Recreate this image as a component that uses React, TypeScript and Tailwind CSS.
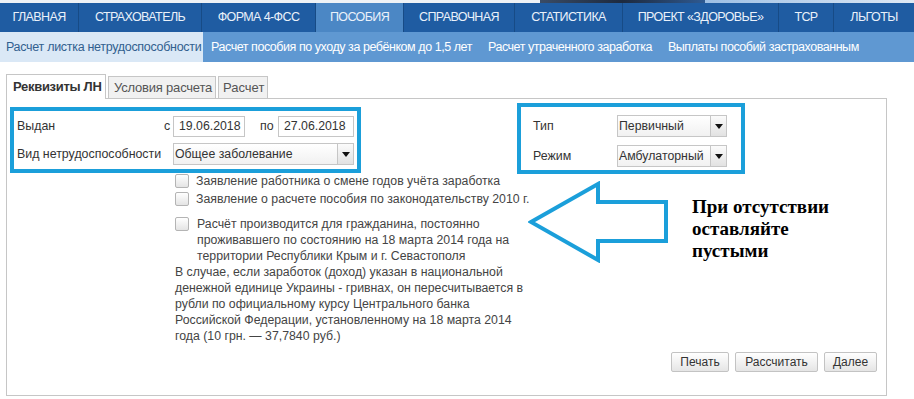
import { ReactNode } from 'react';

const sans = { fontFamily: '"Liberation Sans", Arial, sans-serif' };

function Caret() {
  return (
    <svg width="8" height="5" viewBox="0 0 8 5">
      <path d="M0 0 H8 L4 5 Z" fill="#111" />
    </svg>
  );
}

function Select({ value, className }: { value: string; className: string }) {
  return (
    <div
      className={`flex h-[22px] items-stretch border border-[#c6c6c6] bg-gradient-to-b from-white to-[#f1f1f1] text-[12.3px] text-[#333] ${className}`}
    >
      <span className="flex flex-1 items-center truncate pl-[1px]">{value}</span>
      <span className="flex w-[16px] items-center justify-center border-l border-[#c6c6c6] bg-gradient-to-b from-[#fbfbfb] to-[#e2e2e2]">
        <Caret />
      </span>
    </div>
  );
}

function DateInput({ value, className }: { value: string; className: string }) {
  return (
    <div
      className={`flex h-[21px] items-center border border-[#c6c6c6] bg-white pl-[5px] text-[12.3px] text-[#333] ${className}`}
    >
      {value}
    </div>
  );
}

function Checkbox() {
  return (
    <span className="block h-[14px] w-[14px] shrink-0 rounded-[2px] border border-[#b4b4b4] bg-gradient-to-b from-white to-[#e4e4e4]" />
  );
}

function Button({ children, className }: { children: ReactNode; className: string }) {
  return (
    <button
      className={`flex h-[20px] items-center justify-center rounded-[2px] border border-[#c3c3c3] bg-gradient-to-b from-white to-[#e5e5e5] text-[12px] text-[#333] ${className}`}
    >
      {children}
    </button>
  );
}

export default function App() {
  const nav = [
    { label: 'ГЛАВНАЯ', w: 'w-[79px]' },
    { label: 'СТРАХОВАТЕЛЬ', w: 'w-[123px]' },
    { label: 'ФОРМА 4-ФСС', w: 'w-[114px]' },
    { label: 'ПОСОБИЯ', w: 'w-[88px]', active: true },
    { label: 'СПРАВОЧНАЯ', w: 'w-[111px]' },
    { label: 'СТАТИСТИКА', w: 'w-[108px]' },
    { label: 'ПРОЕКТ «ЗДОРОВЬЕ»', w: 'w-[156px]' },
    { label: 'ТСР', w: 'w-[55px]' },
    { label: 'ЛЬГОТЫ', w: 'w-[80px]' },
  ];

  const sub = [
    'Расчет пособия по уходу за ребёнком до 1,5 лет',
    'Расчет утраченного заработка',
    'Выплаты пособий застрахованным',
  ];

  return (
    <div className="h-[399px] w-[914px] overflow-hidden bg-white" style={sans}>
      {/* photo strip */}
      <div className="flex h-[3px]">
        <div className="w-[540px] bg-[#eef2f6]" />
        <div className="w-[165px] bg-gradient-to-r from-[#3a4c66] via-[#1d2a3f] to-[#2e5a92]" />
        <div className="flex-1 bg-gradient-to-r from-[#9dbfe4] to-[#dfe9f4]" />
      </div>

      {/* main nav */}
      <div className="flex h-[29px] bg-[#1f5ca2]">
        {nav.map((item) => (
          <div
            key={item.label}
            className={`flex items-center justify-center border-r border-[#174b86] text-[12.5px] tracking-[-0.6px] text-[#eaf1fa] last:border-r-0 ${item.w} ${
              item.active ? 'bg-[#4b87c5]' : ''
            }`}
          >
            {item.label}
          </div>
        ))}
      </div>

      {/* sub nav */}
      <div className="flex h-[30px] items-stretch whitespace-nowrap bg-[#5f98d2] text-[12.5px] tracking-[-0.45px]">
        <div className="flex w-[203px] items-center bg-[#dae8f6] pl-[6px] tracking-[-0.3px] text-[#31608f]">
          Расчет листка нетрудоспособности
        </div>
        {sub.map((s) => (
          <div key={s} className="flex items-center px-[8px] text-white">
            {s}
          </div>
        ))}
      </div>

      {/* content */}
      <div className="pl-[6px] pr-[27px] pt-[12px]">
        {/* tabs */}
        <div className="relative z-10 flex items-end gap-[2px] whitespace-nowrap text-[13px]">
          <div className="flex h-[25px] w-[100px] items-center border border-b-0 border-[#c6c6c6] bg-white pl-[6px] font-bold tracking-[-0.3px] text-[#333]">
            Реквизиты ЛН
          </div>
          <div className="flex h-[23px] w-[108px] items-center border border-[#c6c6c6] bg-[#f1f1f1] pl-[5px] tracking-[-0.2px] text-[#555]">
            Условия расчета
          </div>
          <div className="flex h-[23px] w-[50px] items-center border border-[#c6c6c6] bg-[#f1f1f1] pl-[4px] text-[#555]">
            Расчет
          </div>
        </div>

        {/* panel */}
        <div className="-mt-px flex h-[298px] flex-col border border-[#c6c6c6] bg-white text-[#333]">
          <div className="flex items-start">
            <div className="ml-[3px] mt-[8px] w-[351px] border-4 border-[#1b9fda] pb-[4px] pl-[3px] pr-[3px] pt-[5px] text-[12.4px]">
              <div className="flex items-center">
                <span className="w-[147px]">Выдан</span>
                <span className="w-[9px]">с</span>
                <DateInput value="19.06.2018" className="w-[72px]" />
                <span className="ml-[15px] w-[18px]">по</span>
                <DateInput value="27.06.2018" className="w-[76px]" />
              </div>
              <div className="mt-[6px] flex items-center">
                <span className="w-[156px]">Вид нетрудоспособности</span>
                <Select value="Общее заболевание" className="w-[181px]" />
              </div>
            </div>

            <div className="ml-[156px] mt-[4px] w-[228px] border-4 border-[#1b9fda] pb-[3px] pl-[12px] pt-[8px] text-[12.4px]">
              <div className="flex items-center">
                <span className="w-[84px]">Тип</span>
                <Select value="Первичный" className="w-[110px]" />
              </div>
              <div className="mt-[8px] flex items-center">
                <span className="w-[84px]">Режим</span>
                <Select value="Амбулаторный" className="w-[110px]" />
              </div>
            </div>
          </div>

          <div className="flex items-start">
            <div className="ml-[168px] w-[353px] whitespace-nowrap text-[12.3px] text-[#444]">
              <div className="flex h-[14px] items-center gap-[7px]">
                <Checkbox />
                <span>Заявление работника о смене годов учёта заработка</span>
              </div>
              <div className="mt-[4px] flex h-[14px] items-center gap-[7px]">
                <Checkbox />
                <span>Заявление о расчете пособия по законодательству 2010 г.</span>
              </div>
              <div className="mt-[11px] flex items-start gap-[8px]">
                <Checkbox />
                <span className="-mt-px leading-[16px]">
                  Расчёт производится для гражданина, постоянно
                  <br />
                  проживавшего по состоянию на 18 марта 2014 года на
                  <br />
                  территории Республики Крым и г. Севастополя
                </span>
              </div>
              <p className="leading-[16px]">
                В случае, если заработок (доход) указан в национальной
                <br />
                денежной единице Украины - гривнах, он пересчитывается в
                <br />
                рубли по официальному курсу Центрального банка
                <br />
                Российской Федерации, установленному на 18 марта 2014
                <br />
                года (10 грн. — 37,7840 руб.)
              </p>
            </div>

            <svg width="142" height="82" viewBox="0 0 142 82" className="mt-[7px]">
              <path
                d="M3 41 L70 3 L70 21 L138 21 L138 60 L70 60 L70 79 Z"
                fill="none"
                stroke="#1b9fda"
                strokeWidth="4"
                strokeLinejoin="miter"
              />
            </svg>

            <div
              className="ml-[22px] mt-[22px] text-[19px] font-bold leading-[22px] text-black"
              style={{ fontFamily: '"Liberation Serif", "Times New Roman", serif' }}
            >
              При отсутствии
              <br />
              оставляйте
              <br />
              пустыми
            </div>
          </div>

          <div className="mt-[8px] flex justify-end gap-[6px] pr-[9px]">
            <Button className="w-[58px]">Печать</Button>
            <Button className="w-[83px]">Рассчитать</Button>
            <Button className="w-[53px]">Далее</Button>
          </div>
        </div>
      </div>
    </div>
  );
}
